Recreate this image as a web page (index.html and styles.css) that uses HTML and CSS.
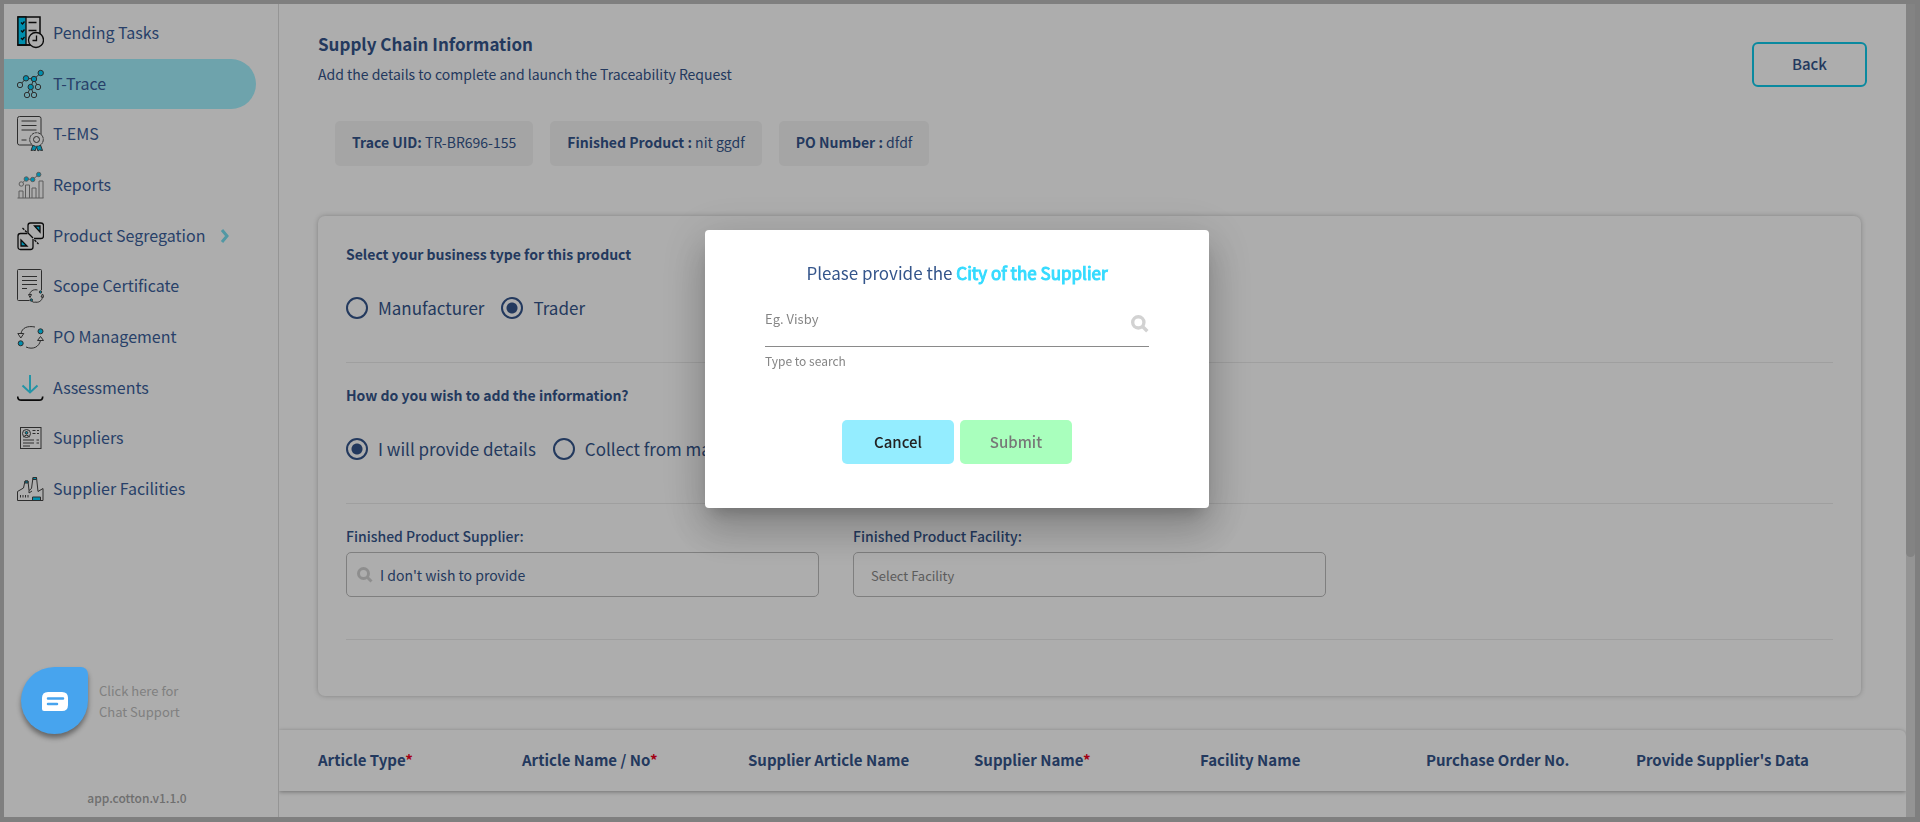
FILE: index.html
```html
<!DOCTYPE html>
<html lang="en">
<head>
    <meta charset="UTF-8">
    <meta name="viewport" content="width=device-width, initial-scale=1.0">
    <title>Supply Chain Information</title>
    <link rel="stylesheet" href="styles.css">
</head>
<body>
    <div class="app">
        <aside class="sidebar">
            <nav class="menu">
                <a href="#" class="menu-item">
                    <svg class="icon" viewBox="0 0 27 36">
                        <rect x="1" y="2" width="22" height="28" stroke-width="1.5"/>
                        <path class="teal" d="M1 2h8v28H1z"/>
                        <path d="M0.500 30h13M11.500 7.500h8M11.500 15.500h8"/>
                        <path d="M4 7.500l1.500 1.500 2-2.500M4 15.500l1.500 1.500 2-2.500M4 23l1.500 1.500 2-2.500"/>
                        <circle class="paper" cx="19" cy="25" r="7.500"/>
                        <path d="M19.500 20.500v5h-4"/>
                    </svg>
                    <span>Pending Tasks</span>
                </a>
                <a href="#" class="menu-item active">
                    <svg class="icon thin" viewBox="0 0 27 36">
                        <path d="M23.700 7L17 13l-8-.7L3 19M17 13l-3.300 8L10 29M17 13l4 8M13.700 21L17 29"/>
                        <g class="teal">
                            <circle cx="23.700" cy="7" r="2.700"/><circle cx="9" cy="12.300" r="2.700"/>
                            <circle cx="17" cy="13" r="2.700"/><circle cx="13.700" cy="21" r="2.700"/>
                        </g>
                        <g class="node">
                            <circle cx="3" cy="19" r="2.700"/><circle cx="21" cy="21" r="2.700"/>
                            <circle cx="10" cy="29" r="2.700"/><circle cx="17" cy="29" r="2.700"/>
                        </g>
                    </svg>
                    <span>T-Trace</span>
                </a>
                <a href="#" class="menu-item">
                    <svg class="icon thin" viewBox="0 0 27 36">
                        <rect x="0.500" y="0.500" width="23.500" height="28.500" rx="2"/>
                        <path d="M4.500 5h15M4.500 9.500h15M4.500 14h15M4.500 24h5"/>
                        <path class="teal" d="M16 29l-2 5.500 3-.5 1 1 1.500-4 1.500 4 1.500-1 3 .5-2-5.500z"/>
                        <circle class="paper" cx="19.500" cy="23.500" r="6.800" stroke-dasharray="2.500 .5"/>
                        <circle cx="19.500" cy="23.500" r="3"/>
                    </svg>
                    <span>T-EMS</span>
                </a>
                <a href="#" class="menu-item">
                    <svg class="icon soft" viewBox="0 0 27 36">
                        <path d="M4.300 17l5-5 6.400.5 6-5"/>
                        <path d="M0.500 31h26M2 31v-7h4v7M8.500 31V18h4v13M15 31V21h4v10M22 31V14h4v17"/>
                        <circle class="paper" cx="4.300" cy="17" r="2.200"/>
                        <g class="teal">
                            <circle cx="9.300" cy="12" r="2.200"/><circle cx="15.700" cy="12.500" r="2.200"/>
                            <circle cx="21.700" cy="7.500" r="2.200"/>
                        </g>
                    </svg>
                    <span>Reports</span>
                </a>
                <a href="#" class="menu-item">
                    <svg class="icon" viewBox="0 0 27 36">
                        <path d="M16 21v8q0 2.500-2.500 2.500h-10Q1 31.500 1 29V18q0-2.500 2.500-2.500h7"/>
                        <path d="M11 15V7.500Q11 5 13.500 5h10.500q2.500 0 2.500 2.500V18q0 2.500-2.500 2.500h-7M11 15l5 5"/>
                        <path class="teal" d="M17.500 8h5.500v6zM4 22l6 6H4z"/>
                        <path d="M5.500 10l4.500 4.500M17.500 22l4 4" stroke-dasharray="2.500 1"/>
                    </svg>
                    <span>Product Segregation</span>
                    <svg class="chevron" viewBox="0 0 10 14"><path d="M2 1l5 6-5 6"/></svg>
                </a>
                <a href="#" class="menu-item">
                    <svg class="icon thin" viewBox="0 0 27 36">
                        <rect x="0.500" y="1.500" width="24" height="31" rx="1"/>
                        <path d="M5 8.500h15M5 12.500h15M5 16.500h15M5 20.500h5"/>
                        <circle class="blank" cx="19" cy="28" r="8"/>
                        <path d="M12.500 27c.5-4 4-6 8-5M25.500 29c-.5 4-4 6-8 5M11.500 26.500h3l-1.500 3zM24 29h3l-1.500-3zM13.500 31.500c1 1.500 2 2.500 4 3"/>
                        <circle class="teal" cx="23.500" cy="24" r="1.200"/><circle class="teal" cx="14.300" cy="32" r="1.200"/>
                    </svg>
                    <span>Scope Certificate</span>
                </a>
                <a href="#" class="menu-item">
                    <svg class="icon thin" viewBox="0 0 27 36">
                        <path d="M4 14.500C5 9 10 6.500 18 8M9 28c7 3 13 0 14.500-6.500M.8 14.500h6L3.800 19zM20.500 21.500h6l-3-4z"/>
                        <circle class="teal" cx="23.500" cy="12.300" r="2.500"/>
                        <circle class="teal" cx="3.700" cy="24.300" r="2.500"/>
                    </svg>
                    <span>PO Management</span>
                </a>
                <a href="#" class="menu-item">
                    <svg class="icon" viewBox="0 0 27 36">
                        <path class="arrow" d="M13 5v17M5.500 15.500l7.500 7 7.500-7"/>
                        <path d="M.7 26.500q0 3.700 3.500 3.700h18q3.500 0 3.500-3.700" stroke-width="1.700"/>
                    </svg>
                    <span>Assessments</span>
                </a>
                <a href="#" class="menu-item">
                    <svg class="icon thin" viewBox="0 0 27 36">
                        <rect x="3.500" y="7.500" width="20.500" height="21"/>
                        <circle cx="9.500" cy="13.500" r="4"/>
                        <path d="M6.500 17q3-3.500 6 0M15.500 10.500h3M20 10.500h2M15.500 13.500h3M20 13.500h2M6 20h11M19.500 20h2.500M6 23h11M19.500 23h2.500M6 26h7"/>
                        <circle class="teal" cx="9.500" cy="12.800" r="1.300"/>
                    </svg>
                    <span>Suppliers</span>
                </a>
                <a href="#" class="menu-item">
                    <svg class="icon thin" viewBox="0 0 27 36">
                        <path d="M.5 29.500v-9l6-3.500 1.500-7h3l1 9.500 2.500-2L16 6.500h3.500l1.500 14 5-3v12z"/>
                        <path class="teal" d="M8 10h3v2H8zM16 6.500h3.500v2H16zM15.500 26h8v3.500h-8z"/>
                        <path d="M3.500 24v2.500M6 24v2.500M8.500 24v2.500M11 24v2.500M1 29.500h25M12 19.500v2.500l3-2"/>
                    </svg>
                    <span>Supplier Facilities</span>
                </a>
            </nav>
            <p class="chat-text">Click here for<br>Chat Support</p>
            <p class="version">app.cotton.v1.1.0</p>
        </aside>

        <main class="main">
            <header class="page-header">
                <div>
                    <h1>Supply Chain Information</h1>
                    <p>Add the details to complete and launch the Traceability Request</p>
                </div>
                <button type="button" class="btn-back">Back</button>
            </header>

            <div class="chips">
                <div class="chip"><b>Trace UID:</b> TR-BR696-155</div>
                <div class="chip"><b>Finished Product :</b> nit ggdf</div>
                <div class="chip"><b>PO Number :</b> dfdf</div>
            </div>

            <form class="card">
                <div class="row" role="radiogroup" aria-labelledby="business-type">
                    <h2 id="business-type">Select your business type for this product</h2>
                    <div class="radios">
                        <label><input type="radio" name="type">Manufacturer</label>
                        <label><input type="radio" name="type" checked>Trader</label>
                    </div>
                </div>
                <div class="row" role="radiogroup" aria-labelledby="info-type">
                    <h2 id="info-type">How do you wish to add the information?</h2>
                    <div class="radios">
                        <label><input type="radio" name="info" checked>I will provide details</label>
                        <label><input type="radio" name="info">Collect from manufacturer</label>
                    </div>
                </div>
                <div class="row fields">
                    <div class="field">
                        <label for="supplier">Finished Product Supplier:</label>
                        <div class="box">
                            <svg class="search" viewBox="0 0 16 16"><circle cx="6.500" cy="6.500" r="5"/><path d="M10.500 10.500l4 4"/></svg>
                            <input type="text" id="supplier" value="I don't wish to provide">
                        </div>
                    </div>
                    <div class="field">
                        <label for="facility">Finished Product Facility:</label>
                        <div class="box">
                            <input type="text" id="facility" placeholder="Select Facility">
                        </div>
                    </div>
                </div>
            </form>

            <div class="table-head">
                <table>
                    <thead>
                        <tr>
                            <th class="col-type">Article Type<span>*</span></th>
                            <th>Article Name / No<span>*</span></th>
                            <th>Supplier Article Name</th>
                            <th>Supplier Name<span>*</span></th>
                            <th>Facility Name</th>
                            <th class="col-order">Purchase Order No.</th>
                            <th class="col-data">Provide Supplier's Data</th>
                        </tr>
                    </thead>
                </table>
            </div>
        </main>
        <div class="scrollbar"><div class="thumb"></div></div>
    </div>

    <div class="overlay">
        <form class="modal" role="dialog" aria-labelledby="modal-title">
            <h3 id="modal-title">Please provide the <strong>City of the Supplier</strong></h3>
            <div class="city">
                <input type="text" id="city" placeholder="Eg. Visby" aria-labelledby="modal-title">
                <svg class="search" viewBox="0 0 16 16"><circle cx="6.500" cy="6.500" r="5"/><path d="M10.500 10.500l4 4"/></svg>
            </div>
            <p class="hint">Type to search</p>
            <div class="actions">
                <button type="button" class="btn-cancel">Cancel</button>
                <button type="submit" class="btn-submit" disabled>Submit</button>
            </div>
        </form>
    </div>

    <button type="button" class="chat" aria-label="Chat">
        <svg viewBox="0 0 26 19">
            <path class="bubble" d="M6 0h14q6 0 6 6v7q0 6-6 6H2q-2 0-2-2V6q0-6 6-6z"/>
            <path class="lines" d="M6 6.500h15M6 12h9"/>
        </svg>
    </button>
</body>
</html>
```
FILE: styles.css
```css
* {
    box-sizing: border-box;
}

body {
    margin: 0;
    padding: 4px 5px 5px 4px;
    background: #bcbcbc;
    color: #34558b;
    font-family: "Noto Sans CJK SC", "Noto Sans", sans-serif;
    font-size: 14px;
    line-height: 20px;
}

h1, h2, h3, p {
    margin: 0;
}

button, input {
    font-family: inherit;
    color: inherit;
}

.app {
    display: flex;
    height: calc(100vh - 9px);
    background: #fff;
    overflow: hidden;
}

/* sidebar */
.sidebar {
    display: flex;
    flex-direction: column;
    width: 275px;
    flex-shrink: 0;
    padding-top: 4px;
    border-right: 1px solid #dcdcdc;
}

.menu {
    display: flex;
    flex-direction: column;
    justify-content: space-between;
    height: 506px;
}

.menu-item {
    display: flex;
    align-items: center;
    gap: 9px;
    height: 50px;
    margin-right: 22px;
    padding-left: 13px;
    border-radius: 0 25px 25px 0;
    font-size: 16px;
    color: #3b5f9b;
    text-decoration: none;
}

.menu-item span {
    padding-bottom: 2px;
}

.menu-item.active {
    background: #a2f0fe;
}

.icon {
    width: 27px;
    height: 36px;
    flex-shrink: 0;
    fill: none;
    stroke: #111;
    stroke-width: 1.3;
}

.icon.thin {
    stroke: #444;
    stroke-width: 1;
}

.icon.soft {
    stroke: #888;
    stroke-width: 1;
}

.icon .teal {
    fill: #00d2ff;
}

.icon .paper {
    fill: #fff;
}

.icon .node {
    fill: #a2f0fe;
}

.icon .blank {
    fill: #fff;
    stroke: none;
}

.icon .arrow {
    stroke: #35dbf5;
    stroke-width: 2;
}

.chevron {
    width: 10px;
    height: 14px;
    margin-left: 6px;
    fill: none;
    stroke: #7ae0f2;
    stroke-width: 3;
}

.chat-text {
    margin: auto 0 66px 95px;
    font-size: 13px;
    line-height: 21px;
    color: #bdbdbd;
}

.version {
    padding: 0 8px 9px 0;
    text-align: center;
    font-size: 12px;
    font-weight: 500;
    color: #a4a4a4;
}

/* main */
.main {
    flex: 1;
    min-width: 0;
    overflow: hidden;
}

.page-header {
    display: flex;
    justify-content: space-between;
    align-items: flex-start;
    padding: 28px 39px 0 39px;
}

.page-header h1 {
    margin-bottom: 8px;
    font-size: 17px;
    line-height: 24px;
}

.btn-back {
    width: 115px;
    height: 45px;
    margin-top: 10px;
    padding-bottom: 3px;
    border: 2px solid #0fcbea;
    border-radius: 6px;
    background: #fff;
    font-size: 15px;
    font-weight: 500;
}

.chips {
    display: flex;
    gap: 17px;
    margin: 34px 0 50px 56px;
}

.chip {
    padding: 11px 17px 14px;
    border-radius: 5px;
    background: #f4f4f4;
}

.card {
    margin: 0 45px 0 39px;
    padding: 0 28px 56px;
    border-radius: 7px;
    background: #fff;
    box-shadow: 0 0 5px rgba(0, 0, 0, 0.25);
}

.row {
    padding: 28px 0 42px;
    border-bottom: 1px solid #eaeaea;
}

.row + .row {
    padding-top: 22px;
}

.row h2 {
    margin-bottom: 32px;
    font-size: 14px;
    line-height: 20px;
}

.radios {
    display: flex;
    gap: 17px;
}

.radios label {
    display: flex;
    align-items: center;
    gap: 10px;
    font-size: 17px;
    line-height: 24px;
}

.radios input {
    appearance: none;
    width: 22px;
    height: 22px;
    margin: 0;
    border: 2px solid #34558b;
    border-radius: 50%;
}

.radios input:checked {
    background: radial-gradient(circle, #34558b 5px, transparent 6px);
}

.fields {
    display: flex;
    gap: 34px;
}

.field {
    width: 32%;
    max-width: 473px;
}

.field label {
    display: block;
    margin-bottom: 6px;
    font-weight: 500;
}

.box {
    display: flex;
    align-items: center;
    height: 45px;
    padding-left: 10px;
    border: 1px solid #bbb;
    border-radius: 5px;
}

.box input {
    flex: 1;
    min-width: 0;
    padding: 0 7px;
    border: none;
    outline: none;
    background: none;
    font-size: 14px;
}

.box input::placeholder {
    font-size: 13px;
    color: #888;
}

.search {
    width: 16px;
    height: 16px;
    fill: none;
    stroke: #d2d2d2;
    stroke-width: 3;
}

.table-head {
    margin-top: 34px;
    padding-left: 39px;
    border-radius: 0 6px 0 0;
    box-shadow: 0 1px 4px rgba(0, 0, 0, 0.35);
}

.table-head table {
    width: 100%;
    table-layout: fixed;
    border-collapse: collapse;
}

.table-head th {
    padding: 20px 0 21px;
    text-align: left;
    font-size: 15px;
}

.table-head span {
    color: #f00020;
}

.col-type {
    width: 204px;
}

.col-order {
    width: 210px;
}

.col-data {
    width: 270px;
}

.scrollbar {
    width: 9px;
    background: #dadada;
}

.thumb {
    height: 68%;
    border-radius: 0 0 5px 5px;
    background: #c1c1c1;
}

/* modal */
.overlay {
    position: fixed;
    inset: 0;
    display: flex;
    justify-content: center;
    align-items: center;
    padding: 0 6px 84px 0;
    background: rgba(0, 0, 0, 0.32);
}

.modal {
    width: 504px;
    padding: 31px 60px 44px;
    border-radius: 4px;
    background: #fff;
    box-shadow: 0 11px 15px -7px rgba(0, 0, 0, 0.2), 0 24px 38px 3px rgba(0, 0, 0, 0.14), 0 9px 46px 8px rgba(0, 0, 0, 0.12);
}

.modal h3 {
    font-size: 17px;
    font-weight: 400;
    line-height: 24px;
    text-align: center;
}

.modal h3 strong {
    font-weight: 400;
    color: #35dbff;
    -webkit-text-stroke: 1px #35dbff;
}

.city {
    display: flex;
    align-items: center;
    height: 62px;
    padding-top: 16px;
    border-bottom: 1px solid #8a8a8a;
}

.city input {
    flex: 1;
    padding: 0 0 10px;
    border: none;
    outline: none;
    font-size: 13px;
}

.city input::placeholder {
    color: #858585;
}

.city .search {
    width: 18px;
    height: 18px;
}

.hint {
    margin: 4px 0 49px;
    font-size: 12px;
    color: #858585;
}

.actions {
    display: flex;
    justify-content: center;
    gap: 6px;
}

.actions button {
    width: 112px;
    height: 44px;
    padding-bottom: 3px;
    border: none;
    border-radius: 5px;
    font-size: 15px;
    font-weight: 500;
}

.btn-cancel {
    background: #94edff;
    color: #222;
}

.btn-submit {
    background: #a9ffbd;
    color: #777;
}

/* chat bubble stays above the overlay */
.chat {
    position: fixed;
    left: 21px;
    bottom: 88px;
    display: flex;
    justify-content: center;
    align-items: center;
    width: 67px;
    height: 67px;
    padding: 2px 0 0;
    border: none;
    border-radius: 50% 7px 50% 50%;
    background: #47a4ee;
    box-shadow: 0 4px 5px rgba(0, 0, 0, 0.4);
}

.chat svg {
    width: 26px;
    height: 19px;
}

.chat .bubble {
    fill: #fff;
}

.chat .lines {
    fill: none;
    stroke: #47a4ee;
    stroke-width: 2.5;
    stroke-linecap: round;
}
```
